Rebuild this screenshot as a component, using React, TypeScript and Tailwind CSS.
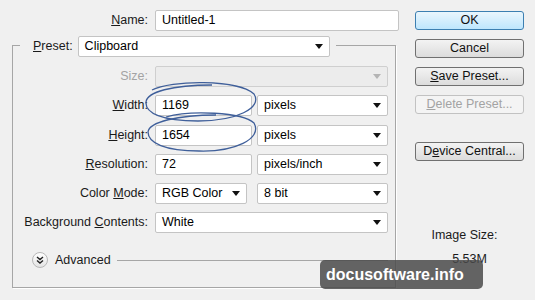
import React from "react";

const font = { fontFamily: '"Liberation Sans", Arial, sans-serif' };

function Arrow({ disabled }: { disabled?: boolean }) {
  return (
    <svg width="8" height="5" viewBox="0 0 8 5" className="shrink-0">
      <polygon points="0,0 8,0 4,5" fill={disabled ? "#b4b4b4" : "#111"} />
    </svg>
  );
}

function Field({ value, w, className = "" }: { value: string; w: string; className?: string }) {
  return (
    <div className={`${w} h-[21px] bg-white border border-[#c4c4c4] rounded-[2px] flex items-center pl-[6px] ${className}`}>
      {value}
    </div>
  );
}

function Select({ value, w, disabled }: { value: string; w: string; disabled?: boolean }) {
  return (
    <div
      className={`${w} h-[21px] border rounded-[2px] flex items-center justify-between pl-[6px] pr-[6px] ${
        disabled ? "bg-[#ececec] border-[#cfcfcf]" : "bg-white border-[#c4c4c4]"
      }`}
    >
      <span>{value}</span>
      <Arrow disabled={disabled} />
    </div>
  );
}

function Label({ children, disabled }: { children: React.ReactNode; disabled?: boolean }) {
  return (
    <div className={`w-[135px] text-right shrink-0 ${disabled ? "text-[#a3a3a3]" : "text-[#1a1a1a]"}`}>{children}</div>
  );
}

function Btn({ children, primary, disabled, className = "" }: { children: React.ReactNode; primary?: boolean; disabled?: boolean; className?: string }) {
  const look = primary
    ? "border-[#3c7fb1] bg-gradient-to-b from-[#eaf6fd] to-[#bee6fd] text-[#111]"
    : disabled
    ? "border-[#c2c2c2] bg-[#f4f4f4] text-[#a3a3a3]"
    : "border-[#707070] bg-gradient-to-b from-[#f3f3f3] to-[#dcdcdc] text-[#111]";
  return (
    <div className={`w-[109px] h-[19px] border rounded-[3px] flex items-center justify-center ${look} ${className}`}>
      {children}
    </div>
  );
}

export default function App() {
  return (
    <div className="relative w-[535px] h-[300px] bg-[#f0f0f0] overflow-hidden text-[12.5px] leading-none" style={font}>
      <div className="flex">
        {/* left side */}
        <div className="w-[415px] pt-[10px]">
          <div className="flex items-center gap-[7px]">
            <div className="w-[148px] text-right text-[#1a1a1a]">
              <u>N</u>ame:
            </div>
            <Field value="Untitled-1" w="w-[244px]" className="border-[#a9c3dc]" />
          </div>

          {/* group box */}
          <div className="ml-[12px] mt-[14px] w-[384px] h-[243px] border border-[#a6a6a6] shadow-[1px_1px_0_#ffffff]">
            <div className="flex -mt-[10px] pl-[7px]">
              <div className="flex items-center gap-[5px] bg-[#f0f0f0] pl-[13px] pr-[6px]">
                <span className="text-[#1a1a1a]">
                  <u>P</u>reset:
                </span>
                <Select value="Clipboard" w="w-[252px]" />
              </div>
            </div>

            <div className="flex flex-col">
              <div className="flex items-center gap-[7px] mt-[9px]">
                <Label disabled>Size:</Label>
                <Select value="" w="w-[233px]" disabled />
              </div>
              <div className="flex items-center gap-[7px] mt-[8px]">
                <Label>
                  <u>W</u>idth:
                </Label>
                <Field value="1169" w="w-[97px]" />
                <div className="ml-[-2px]">
                  <Select value="pixels" w="w-[131px]" />
                </div>
              </div>
              <div className="flex items-center gap-[7px] mt-[9px]">
                <Label>
                  <u>H</u>eight:
                </Label>
                <Field value="1654" w="w-[97px]" />
                <div className="ml-[-2px]">
                  <Select value="pixels" w="w-[131px]" />
                </div>
              </div>
              <div className="flex items-center gap-[7px] mt-[8px]">
                <Label>
                  <u>R</u>esolution:
                </Label>
                <Field value="72" w="w-[97px]" />
                <div className="ml-[-2px]">
                  <Select value="pixels/inch" w="w-[131px]" />
                </div>
              </div>
              <div className="flex items-center gap-[7px] mt-[8px]">
                <Label>
                  Color <u>M</u>ode:
                </Label>
                <Select value="RGB Color" w="w-[92px]" />
                <div className="ml-[3px]">
                  <Select value="8 bit" w="w-[131px]" />
                </div>
              </div>
              <div className="flex items-center gap-[7px] mt-[8px]">
                <Label>
                  Background <u>C</u>ontents:
                </Label>
                <Select value="White" w="w-[233px]" />
              </div>

              {/* advanced */}
              <div className="flex items-center mt-[19px] pl-[19px] pr-[7px]">
                <div className="w-[16px] h-[16px] rounded-full border border-[#b8b8b8] bg-gradient-to-b from-white to-[#e4e4e4] flex items-center justify-center">
                  <svg width="8" height="8" viewBox="0 0 8 8">
                    <path d="M1 1 L4 3.5 L7 1 M1 4.5 L4 7 L7 4.5" stroke="#222" strokeWidth="1.4" fill="none" />
                  </svg>
                </div>
                <span className="ml-[7px] text-[#1a1a1a]">Advanced</span>
                <div className="flex-1 ml-[6px] h-px bg-[#a6a6a6]" />
              </div>
            </div>
          </div>
        </div>

        {/* right side */}
        <div className="w-[109px] pt-[11px] flex flex-col">
          <Btn primary>OK</Btn>
          <Btn className="mt-[9px]">Cancel</Btn>
          <Btn className="mt-[9px]">
            <span>
              <u>S</u>ave Preset...
            </span>
          </Btn>
          <Btn disabled className="mt-[9px]">
            <span>
              <u>D</u>elete Preset...
            </span>
          </Btn>
          <Btn className="mt-[28px]">
            <span>
              D<u>e</u>vice Central...
            </span>
          </Btn>
          <div className="mt-[68px] text-center text-[#1a1a1a] pr-[10px]">Image Size:</div>
          <div className="mt-[11px] text-center text-[#1a1a1a]">5.53M</div>
        </div>
      </div>

      {/* hand-drawn marks */}
      <svg className="absolute left-0 top-0 pointer-events-none" width="535" height="300">
        <g stroke="#3f5f9a" strokeWidth="1.3" fill="none">
          <path d="M152 90 C 170 80, 238 79, 254 94 C 263 108, 236 121, 198 121 C 162 121, 145 113, 146 102 C 147 92, 172 85, 212 85" />
          <path d="M166 117 C 190 110, 242 112, 254 123 C 263 139, 234 152, 199 151 C 165 151, 148 143, 148 132 C 149 122, 178 115, 216 115" />
        </g>
      </svg>

      {/* watermark */}
      <div className="absolute left-[320px] top-[260px] w-[163px] h-[29px] rounded-[5px] bg-[#4a4a4a]/85 flex items-center pl-[6px]">
        <span className="text-white font-bold text-[16px]">docusoftware.info</span>
      </div>
    </div>
  );
}
